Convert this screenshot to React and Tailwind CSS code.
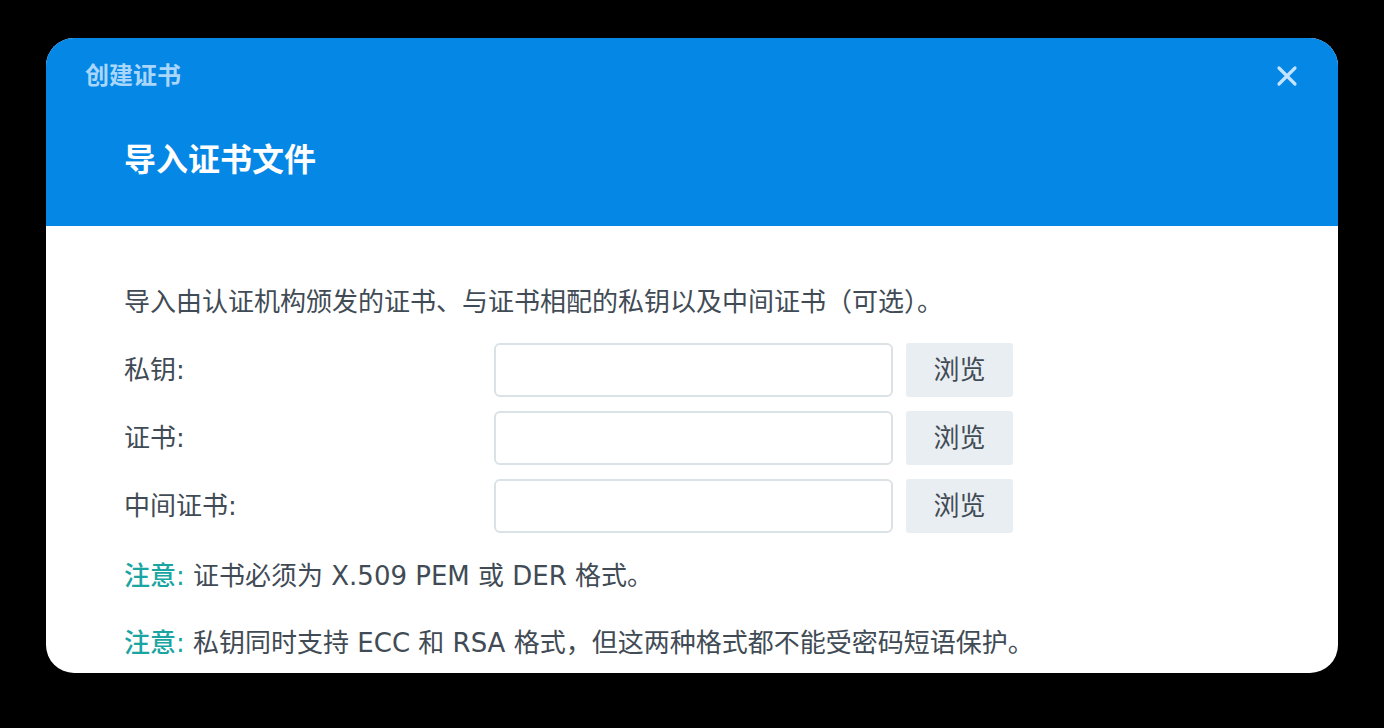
import React from "react"

const font = { fontFamily: '"DejaVu Sans", "Noto Sans CJK SC", sans-serif' }

function FileRow({ label }) {
  return (
    <div className="flex items-center">
      <div className="w-[370px] text-[26px] text-[#414b55]">{label}</div>
      <div className="h-[54px] w-[399px] rounded-[6px] border-2 border-[#dae2e5] bg-white" />
      <button
        type="button"
        className="ml-[13px] h-[54px] w-[107px] rounded-[3px] bg-[#e9eef2] text-[26px] text-[#414b55]"
      >
        浏览
      </button>
    </div>
  )
}

export default function App() {
  return (
    <div className="min-h-screen w-full bg-black pt-[38px] pl-[46px]" style={font}>
      <div className="flex h-[635px] w-[1292px] flex-col overflow-hidden rounded-[28px] bg-white">
        <div className="h-[188px] shrink-0 bg-[#0587e6]">
          <div className="flex items-center justify-between pl-[39px] pr-[40px] pt-[24px]">
            <span className="text-[24px] font-bold leading-[28px] text-[#a9d6fb]">创建证书</span>
            <svg width="22" height="22" viewBox="0 0 22 22" className="text-[#c4e3fc]">
              <path d="M3 3 L19 19 M19 3 L3 19" stroke="currentColor" strokeWidth="3.2" strokeLinecap="round" />
            </svg>
          </div>
          <h1 className="mt-[50px] pl-[78px] text-[32px] font-bold leading-[40px] text-white">导入证书文件</h1>
        </div>
        <div className="flex flex-col pl-[78px] pt-[60px]">
          <p className="text-[26px] leading-[32px] text-[#414b55]">
            导入由认证机构颁发的证书、与证书相配的私钥以及中间证书（可选）。
          </p>
          <div className="mt-[25px] flex flex-col gap-[14px]">
            <FileRow label="私钥:" />
            <FileRow label="证书:" />
            <FileRow label="中间证书:" />
          </div>
          <p className="mt-[27px] text-[26px] leading-[32px] text-[#414b55]">
            <span className="font-medium text-[#1aa5a2]">注意:</span> 证书必须为 X.509 PEM 或 DER 格式。
          </p>
          <p className="mt-[35px] text-[26px] leading-[32px] text-[#414b55]">
            <span className="font-medium text-[#1aa5a2]">注意:</span> 私钥同时支持 ECC 和 RSA 格式，但这两种格式都不能受密码短语保护。
          </p>
        </div>
      </div>
    </div>
  )
}
